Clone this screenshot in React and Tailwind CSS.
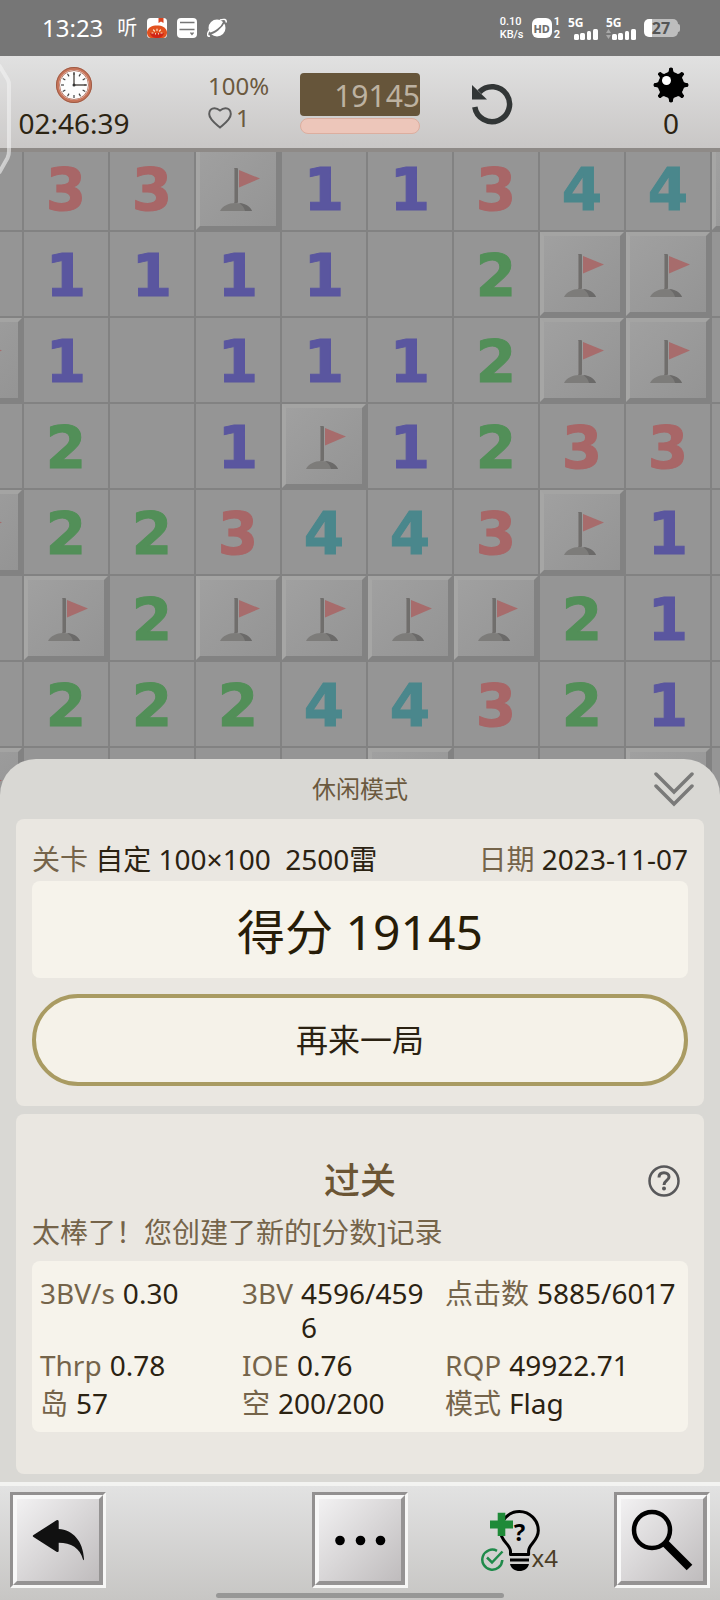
import React, { useState } from 'react';

// '.' open and empty, 'F' flagged, '#' still covered
const rows = [
  '.33F11344#',
  '.1111.2FF.',
  'F1.1112FF.',
  '.2.1F1233.',
  'F223443F1.',
  '.F2FFFF21.',
  '.22244321.',
  'F....#..#.',
];

const digitColors = {
  1: 'text-[#5a569f]',
  2: 'text-[#528f58]',
  3: 'text-[#a86667]',
  4: 'text-[#4a878c]',
};

const stats = [
  { label: '3BV/s', value: '0.30' },
  { label: '3BV', value: '4596/4596' },
  { label: '点击数', value: '5885/6017' },
  { label: 'Thrp', value: '0.78' },
  { label: 'IOE', value: '0.76' },
  { label: 'RQP', value: '49922.71' },
  { label: '岛', value: '57' },
  { label: '空', value: '200/200' },
  { label: '模式', value: 'Flag' },
];

const FlagIcon = () => (
  <svg viewBox="-2 -2 76 76" className="h-full w-full">
    <path d="M18 59 C20 54 27 51 33 51 C42 51 48 54 50 59 Z" fill="#7d7c7a" />
    <path d="M37 51 C43 51.500 48 54 50 59 H43 C42 55 40 53 37 51 Z" fill="#6b6a69" />
    <rect x="32" y="16" width="4" height="35" rx="1" fill="#706e6c" />
    <path d="M32.500 17 V50" stroke="#848281" strokeWidth="1" />
    <path d="M37 18 L58 26.500 L37 35.500 Z" fill="#a76c6c" />
  </svg>
);

const Cell = ({ value }) => {
  const covered = value === 'F' || value === '#';
  return (
    <button
      type="button"
      className="flex h-[86px] items-center justify-center border-l-2 border-t-2 border-[#828282] bg-[#959595]"
    >
      {covered && (
        <span className="block h-full w-full border-4 border-b-[#828282] border-l-[#a6a6a5] border-r-[#828282] border-t-[#a4a4a3] bg-linear-to-br from-[#a0a0a0] to-[#949494]">
          {value === 'F' && <FlagIcon />}
        </span>
      )}
      {digitColors[value] && (
        <span
          className={`pt-1 font-['DejaVu_Sans'] text-[58px] leading-none font-bold [-webkit-text-stroke:1px_currentColor] ${digitColors[value]}`}
        >
          {value}
        </span>
      )}
    </button>
  );
};

const SignalBars = ({ data }) => (
  <div className="flex flex-col text-[12px] leading-3 font-bold">
    <span>5G</span>
    <svg width="30" height="11" viewBox="0 0 30 11">
      {data && (
        <g fill="#a8a8a8">
          <path d="M0 4 L2.500 0 L5 4 Z" />
          <path d="M0 6 L2.500 10 L5 6 Z" />
        </g>
      )}
      <g fill="#fff">
        <rect x="6" y="5" width="5" height="6" rx="1.500" />
        <rect x="12" y="4" width="5" height="7" rx="1.500" />
        <rect x="19" y="2" width="4" height="9" rx="1.500" />
        <rect x="25" y="0" width="5" height="11" rx="1.500" />
      </g>
    </svg>
  </div>
);

const StatusBar = () => (
  <div className="flex h-14 items-center justify-between bg-[#767676] pr-10 pl-[42px] text-white">
    <div className="flex items-center gap-2.5">
      <span className="pr-1 text-2xl leading-7">13:23</span>
      <span className="text-xl leading-6">听</span>
      <svg width="20" height="20" viewBox="0 0 20 20">
        <rect width="20" height="20" rx="3.500" fill="#fff" />
        <path d="M11.500 0 H16.500 V5 L14 3.500 L11.500 5 Z" fill="#d9431f" />
        <path d="M0 14 C1 9 5 7.500 10 7.500 C15 7.500 19 9 20 14 C20 18 18 20 15 20 H5 C2 20 0 18 0 14 Z" fill="#e2511f" />
        <path d="M3 15 H17 C16 19 13 20 10 20 C7 20 4 19 3 15 Z" fill="#d02416" />
        <path
          d="M10 11 V12.500 M6.500 12 L7.500 13 M13.500 12 L12.500 13 M5 15 H6 M14 15 H15 M8.500 16 V15.500 M11.500 16 V15.500"
          stroke="#fbe3c8"
          strokeWidth="1.200"
          strokeLinecap="round"
        />
      </svg>
      <svg width="20" height="20" viewBox="0 0 20 20">
        <rect width="20" height="20" rx="4" fill="#fff" />
        <path d="M3 4.500 H17.500 M2.500 11.500 H17.500" stroke="#767676" strokeWidth="1.500" />
        <path d="M13.500 14.500 L15 16.500 L16.500 14.500" stroke="#767676" strokeWidth="1.300" fill="none" />
      </svg>
      <svg width="20" height="20" viewBox="0 0 20 20">
        <circle cx="10" cy="10" r="8.500" fill="#fff" />
        <path d="M2.500 15.500 C7 15.500 15 9.500 17 4" stroke="#767676" strokeWidth="1.800" fill="none" />
        <path d="M2 12.500 C0 16 0 18.800 3 18 M13 2 C17 0.800 20 1.200 19 4.500" stroke="#fff" strokeWidth="1.500" fill="none" />
      </svg>
    </div>
    <div className="flex items-center gap-2">
      <div className="flex w-6 flex-col font-['Roboto'] text-[11px] leading-[13px] font-medium">
        <span>0.10</span>
        <span>KB/s</span>
      </div>
      <div className="flex items-center gap-0.5">
        <span className="flex h-5 w-5 items-center justify-center rounded-md bg-white text-[11px] leading-none font-extrabold text-[#707070]">
          HD
        </span>
        <span className="flex flex-col font-['Roboto'] text-[11px] leading-[13px] font-bold">
          <span>1</span>
          <span>2</span>
        </span>
      </div>
      <SignalBars />
      <SignalBars data />
      <div className="flex items-center">
        <span className="flex h-[18px] w-[34px] items-center justify-center rounded-[5px] bg-linear-to-r from-white from-25% to-[#bdbdbd] to-25% text-base leading-none font-bold text-[#555]">
          27
        </span>
        <span className="h-2 w-0.5 rounded-r-sm bg-[#bdbdbd]" />
      </div>
    </div>
  </div>
);

const ClockIcon = () => (
  <svg width="36" height="36" viewBox="0 0 36 36">
    <circle cx="18" cy="18" r="16.500" fill="#fdfdfd" stroke="#c9755a" strokeWidth="3" />
    <circle cx="18" cy="18" r="17.500" fill="none" stroke="#9c5c47" strokeWidth="1" />
    <circle cx="18" cy="18" r="14.500" fill="none" stroke="#a9604a" strokeWidth="0.800" />
    {[0, 30, 60, 90, 120, 150, 180, 210, 240, 270, 300, 330].map((a) => (
      <path key={a} d="M18 5 V8" stroke="#444" strokeWidth="1.200" transform={`rotate(${a} 18 18)`} />
    ))}
    <path d="M18 6 V18 H30" stroke="#55504c" strokeWidth="1.400" fill="none" />
    <circle cx="18" cy="18" r="1.500" fill="#333" />
  </svg>
);

const MineIcon = () => (
  <svg width="36" height="36" viewBox="0 0 36 36">
    {[0, 45, 90, 135, 180, 225, 270, 315].map((a) => (
      <path key={a} d="M13 7 Q16 5.500 16 3 V1.500 Q18 -0.500 20 1.500 V3 Q20 5.500 23 7 Z" transform={`rotate(${a} 18 18)`} />
    ))}
    <circle cx="18" cy="18" r="13" />
    <circle cx="13.500" cy="13.500" r="4.500" fill="#fff" />
  </svg>
);

const Header = () => (
  <header className="relative grid h-24 grid-cols-[37fr_38fr_30fr_36fr_39fr] border-b-4 border-[#8e8a87] bg-linear-to-b from-[#e1e1e1] to-[#c9c7c6]">
    <div className="flex flex-col items-center pt-[11px] text-[#2c2413]">
      <ClockIcon />
      <span className="text-[28px] leading-10">02:46:39</span>
    </div>
    <div className="flex flex-col pt-3.5 pl-[60px] text-2xl leading-8 text-[#6b593e]">
      <span>100%</span>
      <span className="flex items-center gap-1">
        <svg width="24" height="22" viewBox="0 0 24 22">
          <path
            d="M12 20.500 C8 17 1.200 12.500 1.200 7 C1.200 3.500 3.500 1.200 6.500 1.200 C9 1.200 10.500 2.200 12 3.500 C13.500 2.200 15 1.200 17.500 1.200 C20.500 1.200 22.800 3.500 22.800 7 C22.800 12.500 16 17 12 20.500 Z"
            fill="none"
            stroke="#5c5c5c"
            strokeWidth="2"
          />
        </svg>
        1
      </span>
    </div>
    <div className="flex flex-col gap-0.5 pt-[17px]">
      <span className="flex h-[43px] items-center justify-end overflow-hidden rounded-sm bg-[#66553a] pt-0.5 text-[30px] leading-none text-[#bdb2a1]">
        19145
      </span>
      <span className="h-4 rounded-full border border-[#dcae9f] bg-[#edc6ba]" />
    </div>
    <div className="flex items-center justify-center pt-1">
      <button type="button" aria-label="Restart">
        <svg width="42" height="42" viewBox="0 0 42 42">
          <path d="M8.500 9 A17.500 17.500 0 1 1 3.800 24" fill="none" stroke="#323636" strokeWidth="5.500" />
          <path d="M1 2 L16 16.500 H1 Z" fill="#323636" />
        </svg>
      </button>
    </div>
    <div className="flex flex-col items-center justify-self-end pt-[11px] pr-[31px] text-[#2c2413]">
      <MineIcon />
      <span className="text-[28px] leading-10">0</span>
    </div>
    <svg width="12" height="112" viewBox="0 0 12 112" className="absolute top-2 left-0 z-10">
      <path
        d="M-1 1 L8 16 Q9 18 9 21 V87 Q9 91 7.500 94 L-1 109"
        fill="#fff"
        fillOpacity="0.080"
        stroke="#f2f2f2"
        strokeOpacity="0.600"
        strokeWidth="4"
      />
    </svg>
  </header>
);

const Bevel = ({ label, children }) => (
  <button
    type="button"
    aria-label={label}
    className="h-24 w-24 border-3 border-b-[#f7f7f6] border-l-[#929090] border-r-[#f7f7f6] border-t-[#929090]"
  >
    <span className="flex h-full w-full items-center justify-center border-4 border-b-[#959393] border-l-[#f8f8f8] border-r-[#959393] border-t-[#f8f8f8] bg-linear-to-br from-[#f2f1f2] to-[#bfbcbd]">
      {children}
    </span>
  </button>
);

const HintIcon = () => (
  <svg width="59" height="64" viewBox="0 0 59 64">
    <path
      d="M29.500 46.500 V43 C29 36 19.300 33 19.300 22.500 A19 19 0 0 1 57.300 22.500 C57.300 33 47.600 36 47.600 43 V46.500 Z"
      fill="none"
      stroke="#000"
      strokeWidth="3"
      strokeLinejoin="round"
    />
    <path d="M29 52 H48" stroke="#000" strokeWidth="3" />
    <path d="M29 56 H48 C47 60.500 43 63 38.500 63 C34 63 30 60.500 29 56 Z" />
    <text x="38.500" y="33" textAnchor="middle" className="text-2xl font-bold">?</text>
    <path d="M16.700 4.700 H24.300 V12.500 H32 V20.500 H24.300 V28 H16.700 V20.500 H9 V12.500 H16.700 Z" fill="#1f8a38" />
    <g fill="none" stroke="#1f8a4a" strokeWidth="2.500">
      <path d="M21.300 52 A10 10 0 1 1 16 42.800" />
      <path d="M6 49.500 L11 54.500 L21.500 43.500" />
    </g>
  </svg>
);

const Toolbar = () => (
  <footer className="relative flex h-[118px] items-start justify-between border-t-4 border-[#f3f3f1] bg-linear-to-b from-[#e2e2e2] to-[#c7c6c4] px-2.5 pt-1.5">
    <Bevel label="Back">
      <svg width="82" height="82" viewBox="0 0 82 82">
        <path
          d="M16.500 38 Q15 37 16.500 36 L39.500 21.300 Q41.700 20.300 41.700 22.500 V30 C56 31 66 42 67 60 Q67 62 66 60.500 C63 49 54 43.700 41.700 43.700 V51.500 Q41.700 53.700 39.500 52.700 Z"
          fill="#111"
        />
      </svg>
    </Bevel>
    <div className="h-24 w-24" />
    <Bevel label="More">
      <svg width="82" height="82" viewBox="0 0 82 82">
        <circle cx="21" cy="41.500" r="4.800" />
        <circle cx="41.500" cy="41.500" r="4.800" />
        <circle cx="61.500" cy="41.500" r="4.800" />
      </svg>
    </Bevel>
    <button type="button" className="flex h-20 w-24 items-end justify-end pr-px">
      <HintIcon />
      <span className="-ml-2 text-2xl leading-7 text-[#4a3d26]">x4</span>
    </button>
    <Bevel label="Zoom">
      <svg width="82" height="82" viewBox="0 0 82 82">
        <circle cx="31" cy="31" r="18" fill="none" stroke="#000" strokeWidth="4.500" />
        <path d="M43.500 43.500 L68.500 68.500" stroke="#000" strokeWidth="8" />
      </svg>
    </Bevel>
    <span className="absolute bottom-0.5 left-1/2 h-[5px] w-2/5 -translate-x-1/2 rounded-full bg-[#979796]" />
  </footer>
);

const App = () => {
  const [open, setOpen] = useState(true);

  return (
    <div className="flex min-h-screen flex-col overflow-hidden bg-[#959595] font-['Noto_Sans','Noto_Sans_CJK_SC',sans-serif]">
      <StatusBar />
      <Header />
      <div className="h-[643px] overflow-hidden">
        <div className="-mt-2 -ml-16 grid grid-cols-[repeat(10,86px)]">
          {rows.map((row, r) => row.split('').map((value, c) => <Cell key={`${r}-${c}`} value={value} />))}
        </div>
      </div>

      {open && (
        <section className="relative -mt-9 flex grow flex-col rounded-t-[36px] bg-[#d9d8d4] px-4 pb-2">
          <div className="relative flex h-[60px] items-center justify-center">
            <h1 className="text-2xl leading-8 text-[#6b593e]">休闲模式</h1>
            <button type="button" aria-label="Collapse" onClick={() => setOpen(false)} className="absolute top-3 right-2.5">
              <svg width="40" height="36" viewBox="0 0 40 36" fill="none" stroke="#7a7a79" strokeWidth="3.500" strokeLinecap="round">
                <path d="M2 3 L20 21 L38 3 M2 15 L20 33 L38 15" />
              </svg>
            </button>
          </div>

          <div className="rounded-lg bg-[#eae7e1] px-4 py-5">
            <div className="mb-0.5 flex justify-between text-[28px] leading-10 whitespace-pre text-[#2b2212]">
              <p><span className="text-[#75644a]">关卡</span> 自定 100×100  2500雷</p>
              <p><span className="text-[#75644a]">日期</span> 2023-11-07</p>
            </div>
            <p className="rounded-lg bg-[#f6f3eb] pt-1 text-center text-5xl leading-[93px] text-[#271c08]">得分 19145</p>
            <button
              type="button"
              className="mt-4 h-[92px] w-full rounded-full border-4 border-[#a99b62] bg-[#f5f2e9] text-[32px] leading-none text-[#2b2212]"
            >
              再来一局
            </button>
          </div>

          <div className="mt-2 rounded-lg bg-[#eae7e1] px-4 pt-[41px] pb-[42px] text-[28px] text-[#75644a]">
            <div className="relative flex h-[52px] items-center justify-center">
              <h2 className="text-4xl leading-none font-medium text-[#6b5534]">过关</h2>
              <button type="button" aria-label="Help" className="absolute right-2">
                <svg width="32" height="32" viewBox="0 0 32 32" fill="none" stroke="#58585a" strokeWidth="2.500">
                  <circle cx="16" cy="16" r="14.500" />
                  <path d="M11 12.500 C11 9.500 13 7.800 16 7.800 C19 7.800 21 9.500 21 12 C21 15.500 16 15.500 16 20" strokeWidth="3" />
                  <circle cx="16" cy="23.500" r="1" strokeWidth="2" />
                </svg>
              </button>
            </div>
            <p className="leading-[50px]">太棒了！您创建了新的[分数]记录</p>
            <dl className="mt-1 grid grid-cols-[202fr_203fr_235fr] gap-y-1 rounded-lg bg-[#f6f3eb] px-2 pt-[15px] pb-3 leading-[34px]">
              {stats.map((s) => (
                <div key={s.label} className="flex min-w-0 gap-2">
                  <dt className="shrink-0">{s.label}</dt>
                  <dd className={s.label === '3BV' ? 'pr-2.5 break-all text-[#2b2212]' : 'text-[#2b2212]'}>{s.value}</dd>
                </div>
              ))}
            </dl>
          </div>
        </section>
      )}

      <Toolbar />
    </div>
  );
};

export default App;
